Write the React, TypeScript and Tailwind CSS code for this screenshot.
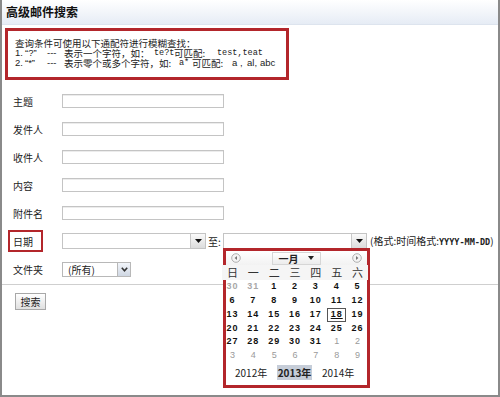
import React from "react";

type Day = { n: number; tone?: "prev" | "next" };

const weeks: Day[][] = [
  [{ n: 30, tone: "prev" }, { n: 31, tone: "prev" }, { n: 1 }, { n: 2 }, { n: 3 }, { n: 4 }, { n: 5 }],
  [{ n: 6 }, { n: 7 }, { n: 8 }, { n: 9 }, { n: 10 }, { n: 11 }, { n: 12 }],
  [{ n: 13 }, { n: 14 }, { n: 15 }, { n: 16 }, { n: 17 }, { n: 18 }, { n: 19 }],
  [{ n: 20 }, { n: 21 }, { n: 22 }, { n: 23 }, { n: 24 }, { n: 25 }, { n: 26 }],
  [{ n: 27 }, { n: 28 }, { n: 29 }, { n: 30 }, { n: 31 }, { n: 1, tone: "next" }, { n: 2, tone: "next" }],
  [3, 4, 5, 6, 7, 8, 9].map((n) => ({ n, tone: "next" as const })),
];

const weekdays = ["日", "一", "二", "三", "四", "五", "六"];

function TextInput() {
  return <div className="w-[162px] h-[14px] border border-[#c4c4c4] bg-white shadow-[inset_0_1px_0_#ececec]" />;
}

function DropButton() {
  return (
    <div className="w-[15px] h-full flex items-center justify-center border-l border-[#c8c8c8] bg-gradient-to-b from-[#fafafa] to-[#dcdcdc]">
      <svg width="7" height="4" viewBox="0 0 7 4">
        <path d="M0 0h7L3.5 4z" fill="#111" />
      </svg>
    </div>
  );
}

function DateInput() {
  return (
    <div className="flex w-[144px] h-[16px] border border-[#c4c4c4] bg-white">
      <div className="flex-1" />
      <DropButton />
    </div>
  );
}

function Row({ label, children, flag }: { label: string; children: React.ReactNode; flag?: boolean }) {
  return (
    <div className="flex items-center h-[28px]">
      <div className="w-[60px] flex items-center">
        {flag ? (
          <span className="ml-[6px] w-[35px] h-[22px] border-2 border-[#b3262b] pl-[3px] flex items-center">{label}</span>
        ) : (
          <span className="pl-[11px]">{label}</span>
        )}
      </div>
      {children}
    </div>
  );
}

function NavCircle({ dir }: { dir: "l" | "r" }) {
  return (
    <svg width="10" height="10" viewBox="0 0 10 10">
      <circle cx="5" cy="5" r="4.3" fill="#f4f4f4" stroke="#a8a8a8" strokeWidth="0.9" />
      <path d={dir === "l" ? "M6 3 L3.6 5 L6 7z" : "M4 3 L6.4 5 L4 7z"} fill="#777" />
    </svg>
  );
}

function Calendar() {
  return (
    <div className="absolute left-0 top-[15px] w-[147px] h-[140px] border-[3px] border-[#b3262b] bg-white z-10">
      {/* nav */}
      <div className="h-[14px] flex items-center justify-between px-[5px] bg-gradient-to-b from-white to-[#f2f2f2]">
        <NavCircle dir="l" />
        <div className="w-[49px] h-[13px] mr-[1px] flex items-center justify-center gap-[9px] border border-[#d6d6d6] bg-gradient-to-b from-white to-[#ececec] text-[10px] font-bold text-[#222]">
          <span>一月</span>
          <svg width="6" height="4" viewBox="0 0 6 4">
            <path d="M0 0h6L3 4z" fill="#222" />
          </svg>
        </div>
        <NavCircle dir="r" />
      </div>
      <div className="ml-[-4px] w-[146px]">
        <div className="grid grid-cols-7 h-[15px] items-center text-[11px] text-[#333] bg-[#f5f5f5]">
          {weekdays.map((w) => (
            <span key={w} className="text-center leading-none">{w}</span>
          ))}
        </div>
        {weeks.map((wk, i) => (
          <div key={i} className="grid grid-cols-7 h-[13.8px] items-center font-['Liberation_Sans',sans-serif] text-[9px]">
            {wk.map((d, j) => (
              <div key={j} className="flex justify-center">
                <span
                  className={
                    (d.tone === "prev"
                      ? "font-bold text-[#a8a8a8] tracking-[1px]"
                      : d.tone === "next"
                      ? "text-[#9a9a9a]"
                      : "font-bold text-[#111] tracking-[1px]") +
                    (i === 2 && j === 5
                      ? " w-[19px] h-[14px] border border-[#555] flex items-center justify-center underline"
                      : "")
                  }
                >
                  {d.n}
                </span>
              </div>
            ))}
          </div>
        ))}
      </div>
      <div className="flex items-center h-[16px] mt-[2px] text-[10px] text-[#222]">
        <span className="ml-[9px] w-[41px]">2012年</span>
        <span className="ml-[1px] w-[35px] h-[15px] flex items-center justify-center bg-[#c6cdd8] font-bold">2013年</span>
        <span className="ml-[10px]">2014年</span>
      </div>
    </div>
  );
}

const seg = "inline-block leading-[10px]";
const latin = "inline-block leading-[10px] font-['Liberation_Sans',sans-serif] text-[9.5px]";
const mono = "inline-block leading-[10px] font-['Liberation_Mono',monospace] text-[8.5px]";

export default function App() {
  return (
    <div className="w-[500px] h-[397px] bg-white font-['Noto_Sans_CJK_SC','Noto_Sans',sans-serif] text-[10px] text-[#222]">
      <div className="relative w-[500px] h-[397px] border-l-2 border-r-2 border-b-2 border-[#8a8a8a] overflow-hidden">
        {/* Header */}
        <div className="h-[25px] flex items-center pl-[4px] border-b border-[#dde4ee] bg-gradient-to-b from-white to-[#e6ecf5]">
          <h1 className="text-[12px] font-bold text-[#111] leading-none">高级邮件搜索</h1>
        </div>

        {/* Wildcard notice */}
        <div className="ml-[3px] mt-[3px] w-[284px] h-[52px] border-[3px] border-[#b3262b] pl-[7px] pt-[7px] text-[9.5px] text-[#222] whitespace-nowrap">
          <p className="h-[10px] leading-[10px]">查询条件可使用以下通配符进行模糊查找：</p>
          <p className="h-[10px] leading-[10px] flex">
            <span className={`${latin} w-[10px]`}>1.</span>
            <span className={`${latin} w-[22px]`}>“?”</span>
            <span className={`${latin} w-[17px]`}>---</span>
            <span className={`${seg} w-[90px]`}>表示一个字符，如：</span>
            <span className={`${mono} w-[20px]`}>te?t</span>
            <span className={`${seg} w-[43px]`}>可匹配:</span>
            <span className={mono}>test,teat</span>
          </p>
          <p className="h-[10px] leading-[10px] flex">
            <span className={`${latin} w-[10px]`}>2.</span>
            <span className={`${latin} w-[22px]`}>“*”</span>
            <span className={`${latin} w-[17px]`}>---</span>
            <span className={`${seg} w-[115px]`}>表示零个或多个字符，如:</span>
            <span className={`${mono} w-[13px]`}>a*</span>
            <span className={`${seg} w-[40px]`}>可匹配:</span>
            <span className={`${latin} w-[15px]`}>a ,</span>
            <span className={`${latin} w-[13px]`}>al,</span>
            <span className={latin}>abc</span>
          </p>
        </div>

        {/* Form */}
        <div className="mt-[7px]">
          <Row label="主题"><TextInput /></Row>
          <Row label="发件人"><TextInput /></Row>
          <Row label="收件人"><TextInput /></Row>
          <Row label="内容"><TextInput /></Row>
          <Row label="附件名"><TextInput /></Row>
          <Row label="日期" flag>
            <div className="flex items-center">
              <DateInput />
              <span className="ml-[2px] w-[15px]">至:</span>
              <div className="relative">
                <DateInput />
                <Calendar />
              </div>
              <span className="ml-[3px] whitespace-nowrap">
                (格式:时间格式:<span className="font-['DejaVu_Sans_Mono',monospace] font-bold text-[8.5px]">YYYY-MM-DD</span>)
              </span>
            </div>
          </Row>
          <Row label="文件夹">
            <div className="flex w-[69px] h-[15px] border border-[#b8b8b8] bg-white">
              <span className="flex-1 pl-[5px] leading-[13px]">(所有)</span>
              <div className="w-[13px] h-full flex items-center justify-center border-l border-[#b8b8b8] bg-gradient-to-b from-[#f2f5fa] to-[#cfd7e3]">
                <svg width="7" height="5" viewBox="0 0 7 5">
                  <path d="M0.8 0.8 L3.5 3.8 L6.2 0.8" fill="none" stroke="#333" strokeWidth="1.6" />
                </svg>
              </div>
            </div>
          </Row>
        </div>

        <div className="mt-[1px] border-t border-[#cfcfcf]" />

        <div className="pl-[13px] pt-[8px]">
          <button className="w-[31px] h-[17px] border border-[#a8a8a8] bg-gradient-to-b from-white to-[#e0e0e0] text-[10px] leading-none text-[#222]">
            搜索
          </button>
        </div>
      </div>
    </div>
  );
}
